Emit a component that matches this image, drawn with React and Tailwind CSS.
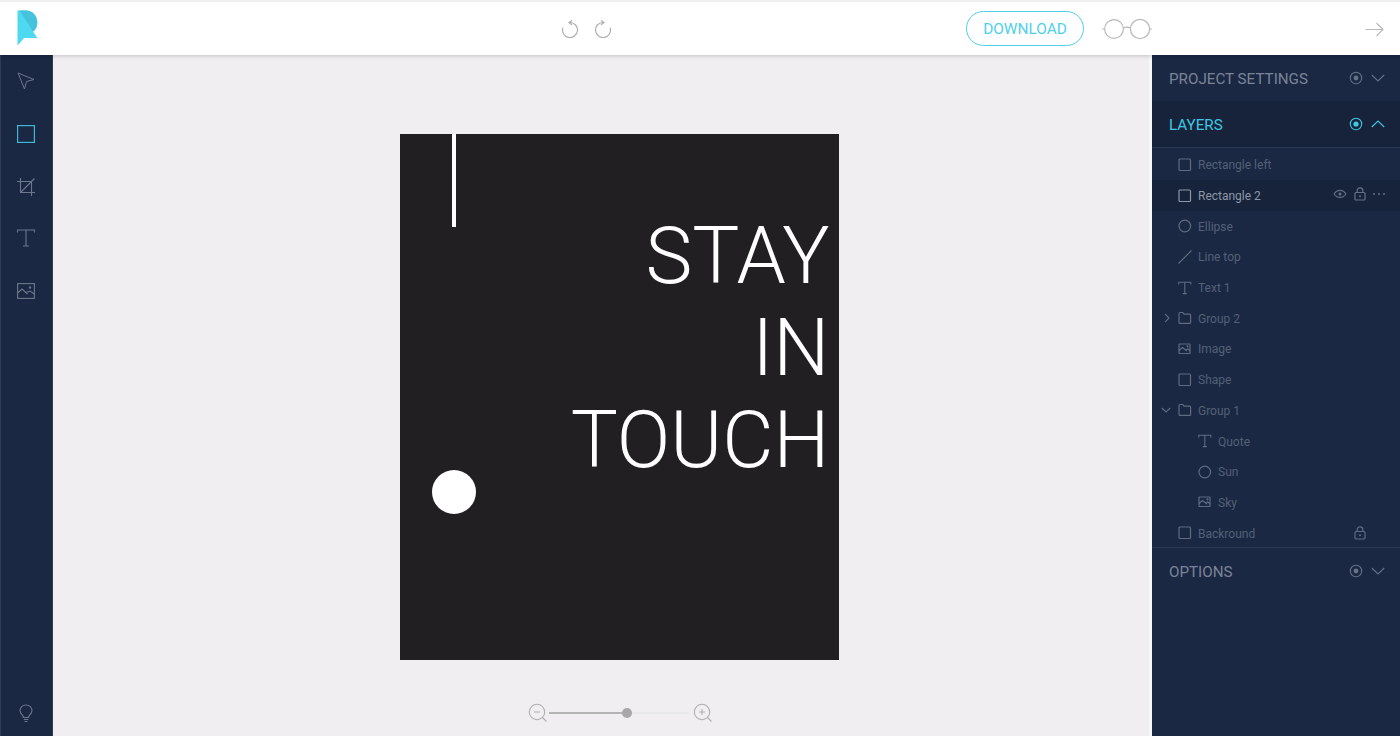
const dim = "#5f6b80";

function Svg({ size = 16, color = dim, sw = 1, children, className = "" }) {
  return (
    <svg width={size} height={size} viewBox={`0 0 ${size} ${size}`} fill="none" stroke={color} strokeWidth={sw} className={`shrink-0 ${className}`}>
      {children}
    </svg>
  );
}

const RectI = ({ c = dim }) => (
  <Svg size={14} color={c} sw={1.2}><rect x="1" y="1" width="11.5" height="11.5" rx="1" /></Svg>
);
const CircleI = () => (
  <Svg size={14} sw={1.2}><circle cx="6.8" cy="7" r="5.8" /></Svg>
);
const LineI = () => (
  <Svg size={14} sw={1.1}><path d="M0.5 13.5 L13.5 0.5" /></Svg>
);
const TextI = () => (
  <Svg size={14} sw={1.1}><path d="M0.8 3.5V1.2H12.8V3.5M6.8 1.2V12.6M4.8 12.6H8.8" /></Svg>
);
const FolderI = () => (
  <Svg size={14} sw={1.2}><path d="M1 3C1 2 1.4 1.5 2.2 1.5H4.8L6 3.2H11.6C12.2 3.2 12.6 3.7 12.6 4.3V11.4C12.6 11.9 12.2 12.4 11.6 12.4H2C1.4 12.4 1 11.9 1 11.4Z" /></Svg>
);
const ImageI = () => (
  <Svg size={14} sw={1.2}><rect x="1" y="2" width="11" height="9.5" rx="0.6" /><path d="M1 8.5L4.5 5.5L9 9M7.5 8L9.8 7L12 8.8" /><circle cx="9.5" cy="4.3" r="0.5" /></Svg>
);
const LockI = ({ c = dim }) => (
  <Svg size={14} color={c} sw={1.2}>
    <rect x="2" y="5.5" width="10" height="7.5" rx="1" />
    <path d="M4.2 5.5V3.5C4.2 2 5.4 0.9 7 0.9C8.6 0.9 9.8 2 9.8 3.5V5.5" />
    <circle cx="7" cy="9.2" r="1" fill={c} stroke="none" />
  </Svg>
);
const EyeI = ({ c = dim }) => (
  <Svg size={14} color={c} sw={1.1}>
    <path d="M1 7C2.6 4.4 4.8 3.4 7 3.4C9.2 3.4 11.4 4.4 13 7C11.4 9.4 9.2 10.4 7 10.4C4.8 10.4 2.6 9.4 1 7Z" />
    <circle cx="7" cy="7" r="1.5" fill={c} stroke="none" />
  </Svg>
);
const ChevDownSm = () => (
  <Svg size={10} sw={1.1}><path d="M0.8 3L5 7L9.2 3" /></Svg>
);
const ChevRightSm = () => (
  <Svg size={10} sw={1.1}><path d="M3 0.8L7 5L3 9.2" /></Svg>
);

function Layer({ icon, label, indent, active, chevron, right }) {
  return (
    <div className={`flex h-[30.7px] items-center ${active ? "bg-[#17233a]" : ""}`}>
      <div className={`relative flex items-center ${indent ? "pl-[46px]" : "pl-[26px]"}`}>
        {chevron}
        {icon}
      </div>
      <span className={`ml-[6px] pt-[1px] text-[12px] ${active ? "text-[#8d97a8]" : "text-[#546074]"}`}>{label}</span>
      {right && <div className="ml-auto flex items-center">{right}</div>}
    </div>
  );
}

function SectionHead({ label, active, h }) {
  const c = active ? "#3fc8e4" : "#667186";
  return (
    <div className={`flex items-center pl-[17px] pr-[15px] ${h} ${active ? "bg-[#17233a]" : ""}`}>
      <span className={`pt-[2px] text-[15.2px] ${active ? "text-[#3fc8e4]" : "text-[#7a8496]"}`}>{label}</span>
      <Svg size={14} color={c} sw={1.1} className="ml-auto">
        <circle cx="7" cy="7" r="5.7" />
        <circle cx="7" cy="7" r={active ? 2.6 : 2.4} fill={c} stroke="none" />
      </Svg>
      <Svg size={14} color={c} sw={1.1} className="ml-[8px]">
        <path d={active ? "M0.8 10L7 4L13.2 10" : "M0.8 4L7 10L13.2 4"} />
      </Svg>
    </div>
  );
}

const UndoPaths = () => (
  <>
    <path d="M9 2.5A7.5 7.5 0 1 1 1.9 7.6" />
    <path d="M11 0.4L8 2.5L11 4.8" />
  </>
);

export default function App() {
  const tool = "#6d778a";
  return (
    <div className="flex h-[736px] w-[1400px] flex-col overflow-hidden bg-[#f0eef1] font-['Roboto',sans-serif]">
      <header className="relative z-10 flex h-[55px] shrink-0 items-center border-t-[2px] border-[#efeef1] bg-white shadow-[0_1px_4px_rgba(0,0,0,0.18)]">
        <svg width="21" height="36" viewBox="0 0 21 36" className="ml-[17px] mt-[-1px] shrink-0">
          <path d="M0.5 0.5H9C15.5 0.5 20.3 5.5 20.3 12.5C20.3 16.5 18.8 19.8 16 21.5L20.3 28H7L0.5 35.5Z" fill="#4fd9f0" />
          <path d="M2.5 0.5H9C15.5 0.5 20.3 5.5 20.3 12.5C20.3 16.5 18.8 19.8 16 21.5L17 23Z" fill="#47c2dc" />
        </svg>
        <div className="ml-[523px] mt-[1px] flex items-center gap-[15px]">
          <Svg size={18} color="#aeaeae" sw={1.2}><UndoPaths /></Svg>
          <Svg size={18} color="#aeaeae" sw={1.2} className="-scale-x-100"><UndoPaths /></Svg>
        </div>
        <button className="ml-[354px] flex h-[35px] w-[118px] items-center justify-center rounded-full border border-[#4fd0e8] bg-white pt-[2px] text-[15.4px] text-[#4fd0e8]">
          DOWNLOAD
        </button>
        <svg width="50" height="22" viewBox="0 0 50 22" fill="none" stroke="#b9b9b9" strokeWidth="1.2" className="ml-[18px] shrink-0">
          <circle cx="12" cy="11" r="9.4" />
          <circle cx="38" cy="11" r="9.6" />
          <path d="M21.5 10C23 8.8 27 8.8 28.4 10M0 11H2.4M47.6 11H50" />
        </svg>
        <svg width="19" height="15" viewBox="0 0 19 15" fill="none" stroke="#b9b9b9" strokeWidth="1.1" className="ml-auto mr-[16px] mt-[1px] shrink-0">
          <path d="M0.5 7.5H18M11.5 1L18 7.5L11.5 14" />
        </svg>
      </header>

      <div className="flex min-h-0 flex-1">
        <aside className="flex w-[53px] shrink-0 flex-col items-center border-x border-[#2f3c56] bg-[#1a2844] pb-[14px] pr-[1px] pt-[17px]">
          <div className="flex flex-col items-center gap-[35px]">
            <Svg size={18} color={tool}><path d="M1 1L17 7.5L9.5 9.5L7.5 17Z" /></Svg>
            <Svg size={18} color="#3fb6d4" sw={1.2}><rect x="0.6" y="0.6" width="16.8" height="16.8" /></Svg>
            <Svg size={18} color={tool} sw={1.1}><path d="M3.5 0V14.5H18M0 3.5H14.5V18M3.5 14.5L17.5 0.5" /></Svg>
            <Svg size={18} color={tool} sw={1.1} className="mt-[-2px]"><path d="M0.5 3.5V1H17.5V3.5M9 1V17M6 17H12" /></Svg>
            <Svg size={18} color={tool} sw={1.1}><rect x="0.6" y="1.6" width="16.8" height="14.8" /><path d="M0.6 11L5 7L10.5 12M9 10.5L13 9L17.4 12" /><circle cx="13" cy="5.5" r="0.7" /></Svg>
          </div>
          <Svg size={18} color={tool} sw={1.1} className="mt-auto">
            <path d="M6.5 13.5C6.5 11 3 10 3 6.5C3 3.4 5.6 1 9 1C12.4 1 15 3.4 15 6.5C15 10 11.5 11 11.5 13.5Z" />
            <path d="M6.8 15.5H11.2M7.5 17.5H10.5" />
          </Svg>
        </aside>

        <main className="flex min-w-0 flex-1 flex-col items-start pl-[347px] pt-[79px]">
          <div className="relative h-[526px] w-[438.5px] bg-[#221f22] pr-[9px] pt-[76px] text-right text-[79px] font-light leading-[92px] text-white">
            <div>STAY</div>
            <div>IN</div>
            <div>TOUCH</div>
            <div className="absolute left-[52px] top-0 h-[93px] w-[4px] bg-white" />
            <div className="absolute left-[32px] top-[336px] h-[44px] w-[44px] rounded-full bg-white" />
          </div>
          <div className="ml-[128px] mt-[43px] flex items-center">
            <Svg size={20} color="#b0b0b0" sw={1.1}>
              <circle cx="9" cy="9" r="7.7" /><path d="M6 9H12M14.5 14.5L18.5 18.5" />
            </Svg>
            <div className="relative ml-[1px] h-[2px] w-[140px] bg-[#e8e7ea]">
              <div className="h-[2px] w-[78px] bg-[#b4b4b4]" />
              <div className="absolute left-[73px] top-[-4px] h-[10px] w-[10px] rounded-full bg-[#a8a8a8]" />
            </div>
            <Svg size={20} color="#b0b0b0" sw={1.1} className="ml-[4px]">
              <circle cx="9" cy="9" r="7.7" /><path d="M6 9H12M9 6V12M14.5 14.5L18.5 18.5" />
            </Svg>
          </div>
        </main>

        <aside className="flex w-[251px] shrink-0 flex-col border-l-[3px] border-[#f7f6f8] bg-[#1a2844]">
          <SectionHead label="PROJECT SETTINGS" h="h-[46px]" />
          <div className="border-b border-[#2a3853]">
            <SectionHead label="LAYERS" active h="h-[46px]" />
          </div>
          <div className="h-[400px] border-b border-[#2f3c56] pt-[1.5px]">
            <Layer icon={<RectI />} label="Rectangle left" />
            <Layer
              icon={<RectI c="#8d97a8" />}
              label="Rectangle 2"
              active
              right={
                <div className="mt-[-3px] flex items-center gap-[6px] pr-[15px]">
                  <EyeI c="#667186" />
                  <LockI c="#667186" />
                  <span className="flex w-[12px] gap-[3px]">
                    <i className="h-[2px] w-[2px] rounded-full bg-[#667186]" />
                    <i className="h-[2px] w-[2px] rounded-full bg-[#667186]" />
                    <i className="h-[2px] w-[2px] rounded-full bg-[#667186]" />
                  </span>
                </div>
              }
            />
            <Layer icon={<CircleI />} label="Ellipse" />
            <Layer icon={<LineI />} label="Line top" />
            <Layer icon={<TextI />} label="Text 1" />
            <Layer icon={<FolderI />} label="Group 2" chevron={<span className="absolute left-[10px] top-[2px]"><ChevRightSm /></span>} />
            <Layer icon={<ImageI />} label="Image" />
            <Layer icon={<RectI />} label="Shape" />
            <Layer icon={<FolderI />} label="Group 1" chevron={<span className="absolute left-[9px] top-[2px]"><ChevDownSm /></span>} />
            <Layer icon={<TextI />} label="Quote" indent />
            <Layer icon={<CircleI />} label="Sun" indent />
            <Layer icon={<ImageI />} label="Sky" indent />
            <Layer icon={<RectI />} label="Backround" right={<div className="pr-[33px]"><LockI /></div>} />
          </div>
          <SectionHead label="OPTIONS" h="h-[46px]" />
        </aside>
      </div>
    </div>
  );
}
